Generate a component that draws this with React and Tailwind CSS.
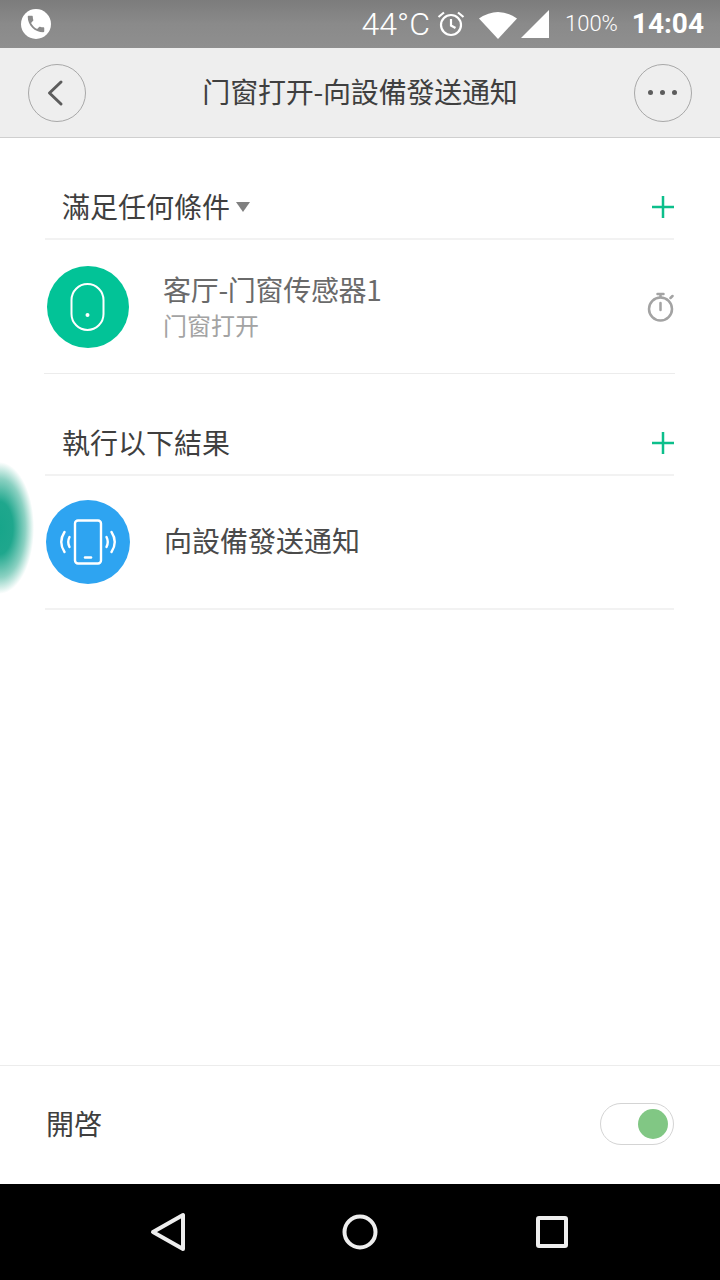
const cjk = { fontFamily: '"Noto Sans CJK SC", "Noto Sans", sans-serif' };

function StatusBar() {
  return (
    <div className="flex h-12 items-center bg-gradient-to-b from-[#7c7c7c] via-[#8a8a8a] to-[#8f8f8f] pl-[21px] pr-4 text-white font-['Roboto',sans-serif]">
      <div className="flex h-[30px] w-[30px] items-center justify-center rounded-full bg-white">
        <svg width="22" height="22" viewBox="0 0 24 24" fill="#8a8a8a">
          <path d="M6.62 10.79c1.44 2.83 3.76 5.14 6.59 6.59l2.2-2.2c.27-.27.67-.36 1.02-.24 1.12.37 2.33.57 3.57.57.55 0 1 .45 1 1V20c0 .55-.45 1-1 1-9.39 0-17-7.61-17-17 0-.55.45-1 1-1h3.5c.55 0 1 .45 1 1 0 1.25.2 2.45.57 3.57.11.35.03.74-.25 1.02l-2.2 2.2z" />
        </svg>
      </div>
      <span className="ml-auto text-[32px] font-light leading-none">44°C</span>
      <svg className="ml-[6px]" width="30" height="30" viewBox="0 0 30 30" fill="none" stroke="#fff" strokeWidth="2.2">
        <circle cx="15" cy="16" r="10" />
        <path d="M15 10v6.5l4.5 2.5M2.5 8 8 3.500M27.500 8 22 3.500" />
      </svg>
      <svg className="ml-[12px]" width="40" height="30" viewBox="0 0 40 30" fill="#fff">
        <path d="M1 9.5Q20-3.5 39 9.5L20 30Z" />
      </svg>
      <svg className="ml-[3px]" width="28" height="28" viewBox="0 0 28 28" fill="#fff">
        <path d="M0 28 28 0v28Z" />
      </svg>
      <span className="ml-[16px] text-[22px] font-light leading-none">100%</span>
      <span className="ml-[14px] text-[28px] font-bold leading-none">14:04</span>
    </div>
  );
}

function Header() {
  return (
    <div className="flex h-[90px] items-center justify-between border-b border-[#cfcfcf] bg-[#eeeeee] px-[28px]">
      <div className="flex h-[58px] w-[58px] items-center justify-center rounded-full border border-[#a8a8a8]">
        <svg width="20" height="28" viewBox="0 0 20 28" fill="none" stroke="#5c5c5c" strokeWidth="3" strokeLinecap="round" strokeLinejoin="round">
          <path d="M14 3 2.500 14 14 25" />
        </svg>
      </div>
      <span className="pb-[3px] text-[28px] leading-none tracking-[-0.2px] text-[#3f3f3f]">门窗打开-向設備發送通知</span>
      <div className="flex h-[58px] w-[58px] items-center justify-center gap-[7px] rounded-full border border-[#a8a8a8]">
        <span className="h-[5px] w-[5px] rounded-full bg-[#5c5c5c]" />
        <span className="h-[5px] w-[5px] rounded-full bg-[#5c5c5c]" />
        <span className="h-[5px] w-[5px] rounded-full bg-[#5c5c5c]" />
      </div>
    </div>
  );
}

function SectionHead({ title, caret }) {
  return (
    <div className="flex h-[102px] items-center border-b-2 border-[#f2f2f2] pl-[17px] pt-[38px]">
      <span className="pb-[2px] text-[28px] leading-none text-[#3f3f3f]">{title}</span>
      {caret && <span className="ml-[6px] h-0 w-0 border-x-[7px] border-t-[10px] border-x-transparent border-t-[#808080]" />}
      <svg className="ml-auto" width="22" height="22" viewBox="0 0 22 22" stroke="#0cbf8b" strokeWidth="2.5">
        <path d="M0 11h22M11 0v22" />
      </svg>
    </div>
  );
}

function SensorIcon() {
  return (
    <div className="flex h-[82px] w-[82px] shrink-0 items-center justify-center rounded-full bg-[#02c397]">
      <svg width="36" height="48" viewBox="0 0 36 48" fill="none">
        <rect x="1.500" y="1" width="32" height="46" rx="16" stroke="#fff" strokeWidth="2" />
        <circle cx="17.500" cy="32" r="2" fill="#fff" />
      </svg>
    </div>
  );
}

function VibrateIcon() {
  return (
    <div className="flex h-[84px] w-[84px] shrink-0 items-center justify-center rounded-full bg-[#2ea4f1]">
      <svg width="58" height="46" viewBox="0 0 58 46" fill="none" stroke="#fff" strokeWidth="2.4" strokeLinecap="round">
        <rect x="16" y="1.500" width="26" height="43" rx="3" />
        <path d="M26 38.500h6" strokeWidth="2.500" />
        <path d="M5.500 13Q-1 23 5.500 33M10.500 18Q8 23 10.500 28M52.500 13Q59 23 52.500 33M47.500 18Q50 23 47.500 28" />
      </svg>
    </div>
  );
}

function TimerIcon() {
  return (
    <svg width="28" height="30" viewBox="0 0 28 30" fill="none" stroke="#a3a3a3" strokeWidth="2.500" strokeLinecap="round">
      <circle cx="14.500" cy="17" r="11.500" />
      <path d="M11.500 2h6M14.500 2v3M24.500 6l2-2M14.500 11v7" />
    </svg>
  );
}

export default function App() {
  return (
    <div className="relative flex h-[1280px] w-[720px] flex-col overflow-hidden bg-white" style={cjk}>
      <StatusBar />
      <Header />

      <div className="ml-[45px] mr-[46px] flex flex-1 flex-col">
        <SectionHead title="滿足任何條件" caret />
        <div className="-mx-px flex h-[134px] items-center border-b border-[#ececec] pl-[3px] pr-px">
          <SensorIcon />
          <div className="ml-[34px] flex flex-col">
            <span className="text-[28px] leading-[32px] tracking-[-0.3px] text-[#6a6a6a]">客厅-门窗传感器1</span>
            <span className="mt-[4px] text-[24px] leading-[32px] text-[#a3a3a3]">门窗打开</span>
          </div>
          <div className="ml-auto">
            <TimerIcon />
          </div>
        </div>

        <SectionHead title="執行以下結果" />
        <div className="flex h-[134px] items-center border-b-2 border-[#f2f2f2] pl-px">
          <VibrateIcon />
          <span className="ml-[34px] pb-[5px] text-[28px] leading-none text-[#4a4a4a]">向設備發送通知</span>
        </div>
      </div>

      <div className="flex h-[119px] items-center justify-between border-t border-[#ececec] pb-[2px] pl-[46px] pr-[46px]">
        <span className="pb-[2px] text-[28px] leading-none text-[#3f3f3f]">開啓</span>
        <div className="flex h-[42px] w-[74px] items-center justify-end rounded-full border border-[#d4d4d4] pr-[5px]">
          <span className="h-[30px] w-[30px] rounded-full bg-[#81c784]" />
        </div>
      </div>

      <div className="flex h-24 items-center justify-between bg-black px-[150px]">
        <svg width="36" height="40" viewBox="0 0 36 40" fill="none" stroke="#eeeeee" strokeWidth="4" strokeLinejoin="round">
          <path d="M33 3v34L3 20Z" />
        </svg>
        <svg width="36" height="36" viewBox="0 0 36 36" fill="none" stroke="#eeeeee" strokeWidth="4">
          <circle cx="18" cy="18" r="15.500" />
        </svg>
        <svg width="36" height="36" viewBox="0 0 36 36" fill="none" stroke="#eeeeee" strokeWidth="4" strokeLinejoin="round">
          <rect x="4" y="4" width="28" height="28" rx="1" />
        </svg>
      </div>

      {/* touch ripple over the list */}
      <div className="absolute left-[-36px] top-[462px] h-[132px] w-[70px] rounded-full bg-[radial-gradient(closest-side,#17a58a_0%,#1fa78d_40%,#8bd1c2_75%,#ffffff_100%)]" />
    </div>
  );
}
